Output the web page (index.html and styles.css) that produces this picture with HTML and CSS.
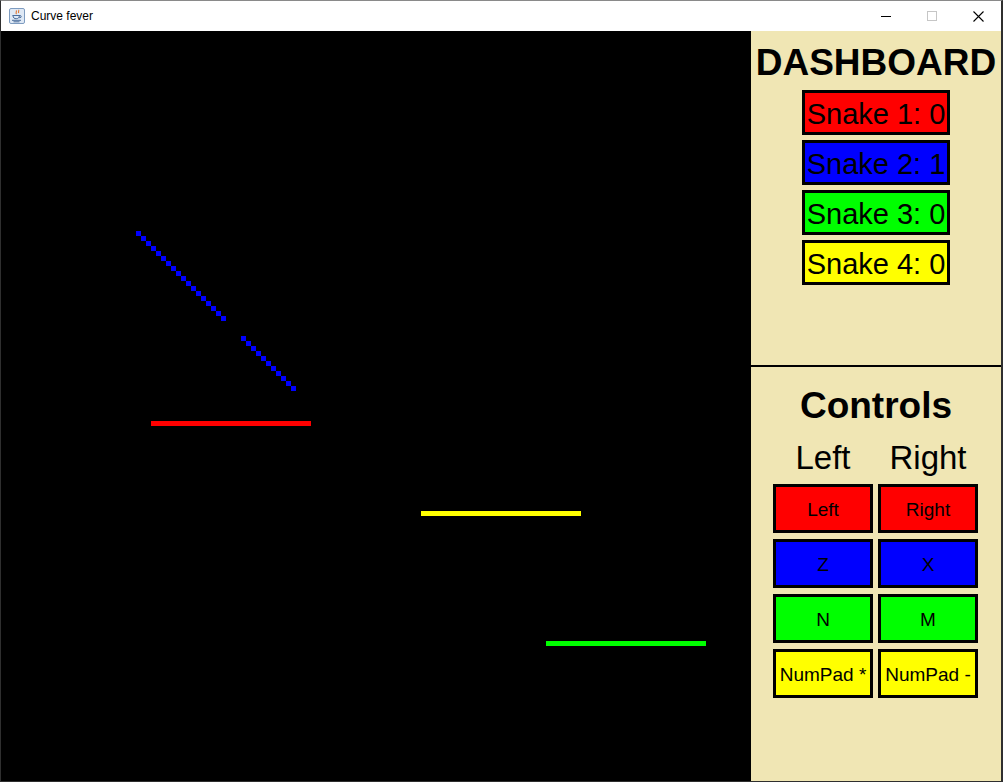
FILE: index.html
```html
<!DOCTYPE html>
<html>
<head>
<meta charset="utf-8">
<title>Curve fever</title>
<link rel="stylesheet" href="styles.css">
</head>
<body>
<div class="window">
  <div class="titlebar">
    <div class="title-left">
      <svg class="app-icon" width="16" height="16" viewBox="0 0 16 16">
        <rect x="0.5" y="0.5" width="15" height="15" rx="1.5" fill="#dfe9f5" stroke="#7e9cc0"/>
        <path d="M7 2.5c1.5 1-1 2 .5 3.5M9.5 2c1 1-.8 1.8.3 3" stroke="#e2742d" stroke-width="1.1" fill="none"/>
        <path d="M3.5 7.5h7.5c1.6 0 1.6 2.2 0 2.2h-.8M4 7.5c0 2.5 1.5 3.2 3.2 3.2S10.4 10 10.4 7.5" stroke="#4a6d9c" stroke-width="1" fill="none"/>
        <path d="M3 12.3h9M4.5 13.8h6" stroke="#4a6d9c" stroke-width="1"/>
      </svg>
      <span class="title-text">Curve fever</span>
    </div>
    <div class="title-controls">
      <div class="tc tc-min"><span class="min-line"></span></div>
      <div class="tc tc-max"><span class="max-box"></span></div>
      <div class="tc tc-close">
        <svg width="11" height="11" viewBox="0 0 11 11"><path d="M0.5 0.5L10.5 10.5M10.5 0.5L0.5 10.5" stroke="#000" stroke-width="1.1"/></svg>
      </div>
    </div>
  </div>
  <div class="content">
    <div class="canvas">
      <svg width="750" height="750" viewBox="0 0 750 750" shape-rendering="crispEdges">
        <g fill="#0000ff" id="blue"></g>
        <rect x="150" y="390" width="160" height="5" fill="#ff0000"/>
        <rect x="420" y="480" width="160" height="5" fill="#ffff00"/>
        <rect x="545" y="610" width="160" height="5" fill="#00ff00"/>
      </svg>
    </div>
    <div class="panel">
      <section class="dashboard">
        <h1 class="heading">DASHBOARD</h1>
        <div class="scores">
          <div class="score red">Snake 1: 0</div>
          <div class="score blue">Snake 2: 1</div>
          <div class="score green">Snake 3: 0</div>
          <div class="score yellow">Snake 4: 0</div>
        </div>
      </section>
      <section class="controls">
        <h2 class="heading">Controls</h2>
        <div class="grid">
          <div class="col-label">Left</div>
          <div class="col-label">Right</div>
          <div class="key red">Left</div>
          <div class="key red">Right</div>
          <div class="key blue">Z</div>
          <div class="key blue">X</div>
          <div class="key green">N</div>
          <div class="key green">M</div>
          <div class="key yellow">NumPad *</div>
          <div class="key yellow">NumPad -</div>
        </div>
      </section>
    </div>
  </div>
</div>
<script>
  var g = document.getElementById('blue');
  var ns = 'http://www.w3.org/2000/svg';
  function seg(x0, y0, n) {
    for (var i = 0; i < n; i++) {
      var r = document.createElementNS(ns, 'rect');
      r.setAttribute('x', x0 + i * 5 - 1);
      r.setAttribute('y', y0 + i * 5 - 31);
      r.setAttribute('width', 5);
      r.setAttribute('height', 5);
      g.appendChild(r);
    }
  }
  seg(136, 231, 18);
  seg(241, 336, 11);
</script>
</body>
</html>
```

FILE: styles.css
```css
* { box-sizing: border-box; }
html, body {
  margin: 0;
  padding: 0;
  width: 1003px;
  height: 782px;
  overflow: hidden;
  background: #fff;
}
.window {
  width: 1003px;
  height: 782px;
  border-left: 1px solid #2f2f2f;
  border-right: 2px solid #2f2f2f;
  border-bottom: 1px solid #2f2f2f;
  border-top: 1px solid #8a8a8a;
  display: flex;
  flex-direction: column;
}
.titlebar {
  height: 30px;
  background: #fff;
  display: flex;
  align-items: center;
  justify-content: space-between;
}
.title-left {
  display: flex;
  align-items: center;
  padding-left: 8px;
}
.app-icon { display: block; }
.title-text {
  font-family: "Liberation Sans", Arial, sans-serif;
  font-size: 12px;
  color: #000;
  margin-left: 6px;
}
.title-controls {
  display: flex;
  height: 30px;
}
.tc {
  width: 46px;
  height: 30px;
  display: flex;
  align-items: center;
  justify-content: center;
}
.min-line {
  display: block;
  width: 10px;
  height: 1px;
  background: #000;
}
.max-box {
  display: block;
  width: 10px;
  height: 10px;
  border: 1px solid #c6c6c6;
}
.tc-close svg { display: block; }
.content {
  flex: 1;
  display: flex;
}
.canvas {
  width: 750px;
  height: 750px;
  background: #000;
}
.canvas svg { display: block; }
.panel {
  width: 250px;
  background: #f0e6b4;
  display: flex;
  flex-direction: column;
  font-family: "Liberation Sans", Arial, sans-serif;
  color: #000;
}
.dashboard {
  height: 336px;
  border-bottom: 2px solid #000;
  padding-top: 13px;
  display: flex;
  flex-direction: column;
  align-items: center;
}
.heading {
  margin: 0;
  font-size: 37px;
  line-height: 37px;
  font-weight: bold;
  text-align: center;
  white-space: nowrap;
}
.scores {
  margin-top: 9px;
  display: flex;
  flex-direction: column;
  gap: 5px;
}
.score {
  width: 148px;
  height: 45px;
  border: 3px solid #000;
  display: flex;
  align-items: center;
  justify-content: center;
  font-size: 29px;
  white-space: nowrap;
  padding-top: 3px;
}
.red { background: #ff0000; }
.blue { background: #0000ff; }
.green { background: #00ff00; }
.yellow { background: #ffff00; }
.controls {
  padding-top: 20px;
  display: flex;
  flex-direction: column;
  align-items: center;
}
.grid {
  margin-top: 17px;
  display: grid;
  grid-template-columns: 100px 100px;
  column-gap: 5px;
  row-gap: 6px;
  margin-left: -1px;
}
.col-label {
  font-size: 33px;
  line-height: 33px;
  text-align: center;
  margin-bottom: 4px;
}
.key {
  height: 49px;
  border: 3px solid #000;
  display: flex;
  align-items: center;
  justify-content: center;
  font-size: 19px;
  white-space: nowrap;
  padding-top: 2px;
}
```
